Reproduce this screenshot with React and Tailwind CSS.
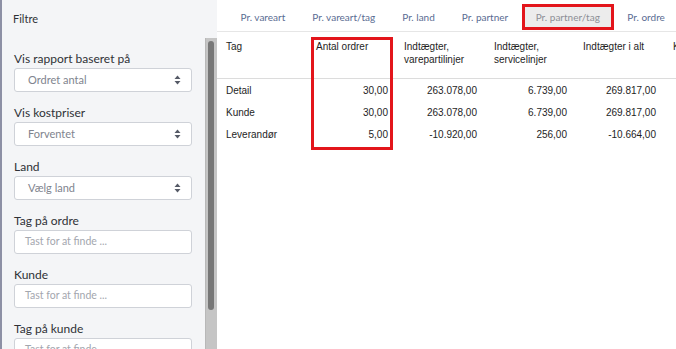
import React from "react";

const lato = { fontFamily: "Lato, 'Open Sans', sans-serif" };

function Chevrons() {
  return (
    <svg width="7" height="10" viewBox="0 0 7 10" className="shrink-0">
      <path d="M3.5 0.5 L6.5 4 L0.5 4 Z" fill="#555a66" />
      <path d="M0.5 6 L6.5 6 L3.5 9.5 Z" fill="#555a66" />
    </svg>
  );
}

function SelectBox({ value }) {
  return (
    <div className="h-[24px] w-[178px] bg-white border border-[#cfd2d8] rounded-[3px] flex items-center justify-between pl-[13px] pr-[10px]">
      <span className="text-[11px] text-[#80848e]">{value}</span>
      <Chevrons />
    </div>
  );
}

function InputBox() {
  return (
    <div className="h-[24px] w-[178px] bg-white border border-[#cfd2d8] rounded-[3px] flex items-center pl-[10px]">
      <span className="text-[10.5px] text-[#a3a6ae]">Tast for at finde ...</span>
    </div>
  );
}

function Group({ label, children }) {
  return (
    <div className="mb-[13px]">
      <div className="h-[16px] leading-[16px] text-[12px] text-[#2f3136] mb-[1px]">{label}</div>
      {children}
    </div>
  );
}

const tabs = ["Pr. vareart", "Pr. vareart/tag", "Pr. land", "Pr. partner", "Pr. partner/tag", "Pr. ordre"];

const rows = [
  ["Detail", "30,00", "263.078,00", "6.739,00", "269.817,00", "120.300,00"],
  ["Kunde", "30,00", "263.078,00", "6.739,00", "269.817,00", "120.300,00"],
  ["Leverandør", "5,00", "-10.920,00", "256,00", "-10.664,00", "0,00"],
];

const colW = ["w-[94px] pl-[9px]", "w-[88px] pl-[5px] pr-[11px]", "w-[90px] pl-[5px] pr-[12px]", "w-[89px] pl-[5px] pr-[11px]", "w-[90px] pl-[5px] pr-[12px]", "w-[90px] pl-[5px] pr-[12px]"];

export default function App() {
  return (
    <div className="w-[676px] h-[349px] flex overflow-hidden bg-white" style={lato}>
      {/* Sidebar */}
      <div className="w-[217px] shrink-0 flex flex-col bg-[#f4f5f7] border-l-2 border-[#8d90a5]">
        <div className="h-[38px] shrink-0 flex items-center pl-[11px] text-[11px] text-[#2f3136]">Filtre</div>
        <div className="flex-1 flex min-h-0">
          <div className="w-[203px] pl-[12px] pt-[13px] overflow-hidden">
            <Group label="Vis rapport baseret på"><SelectBox value="Ordret antal" /></Group>
            <Group label="Vis kostpriser"><SelectBox value="Forventet" /></Group>
            <Group label="Land"><SelectBox value="Vælg land" /></Group>
            <Group label="Tag på ordre"><InputBox /></Group>
            <Group label="Kunde"><InputBox /></Group>
            <Group label="Tag på kunde"><InputBox /></Group>
          </div>
          <div className="w-[12px] bg-[#c5c5c5] border-l border-[#b8b8b8] pt-[3px] pl-[2px]">
            <div className="w-[6px] h-[269px] bg-[#777777] rounded-[3px]" />
          </div>
        </div>
      </div>

      {/* Main */}
      <div className="flex-1 min-w-0 flex flex-col overflow-hidden">
        <div className="h-[32px] shrink-0 border-b border-[#e6e6e6] flex items-end pl-[10px] pb-[1px]">
          {tabs.map((t) =>
            t === "Pr. partner/tag" ? (
              <div key={t} className="h-[26px] flex items-center px-[11px] bg-[#ececec] border-[3px] border-[#e3151b] text-[10px] text-[#8c8f96] whitespace-nowrap">
                {t}
              </div>
            ) : (
              <div key={t} className="h-[26px] flex items-center px-[13.5px] text-[10px] text-[#5a6c92] whitespace-nowrap">
                {t}
              </div>
            )
          )}
        </div>

        <div className="relative" style={{ fontFamily: "'Liberation Sans Narrow', 'Liberation Sans', Arial, sans-serif" }}>
          <div className="flex h-[47px] border-b border-[#dcdcdc] pt-[8px] text-[10px] leading-[13px] text-[#1e1e1e]">
            <div className={`shrink-0 ${colW[0]}`}>Tag</div>
            <div className={`shrink-0 ${colW[1]}`}>Antal ordrer</div>
            <div className={`shrink-0 ${colW[2]}`}>Indtægter,<br />varepartilinjer</div>
            <div className={`shrink-0 ${colW[3]}`}>Indtægter,<br />servicelinjer</div>
            <div className={`shrink-0 ${colW[4]}`}>Indtægter i alt</div>
            <div className={`shrink-0 ${colW[5]} whitespace-nowrap`}>Kostpris i alt</div>
          </div>
          {rows.map((r) => (
            <div key={r[0]} className="flex h-[22px] items-center text-[10px] text-[#1e1e1e]">
              {r.map((c, i) => (
                <div key={i} className={`shrink-0 ${colW[i]} ${i > 0 ? "text-right" : ""}`}>{c}</div>
              ))}
            </div>
          ))}
          <div className="absolute left-[94px] top-[5px] w-[82px] h-[113px] border-[3px] border-[#e3151b] pointer-events-none" />
        </div>
      </div>
    </div>
  );
}
